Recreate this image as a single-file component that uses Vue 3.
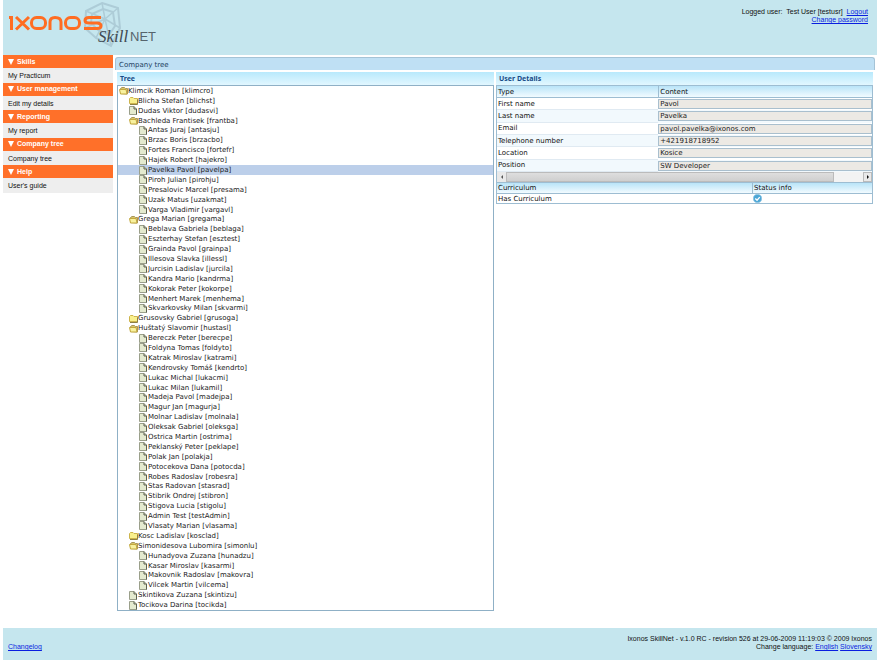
<script setup>
import { ref } from 'vue'

const menu = [
  { title: 'Skills', link: 'My Practicum' },
  { title: 'User management', link: 'Edit my details' },
  { title: 'Reporting', link: 'My report' },
  { title: 'Company tree', link: 'Company tree' },
  { title: 'Help', link: "User's guide" },
]

const source = `open 0 Klimcik Roman [klimcro]
folder 1 Blicha Stefan [blichst]
file 1 Dudas Viktor [dudasvi]
open 1 Bachleda Frantisek [frantba]
file 2 Antas Juraj [antasju]
file 2 Brzac Boris [brzacbo]
file 2 Fortes Francisco [fortefr]
file 2 Hajek Robert [hajekro]
file 2 Pavelka Pavol [pavelpa]
file 2 Piroh Julian [pirohju]
file 2 Presalovic Marcel [presama]
file 2 Uzak Matus [uzakmat]
file 2 Varga Vladimir [vargavl]
open 1 Grega Marian [gregama]
file 2 Beblava Gabriela [beblaga]
file 2 Eszterhay Stefan [esztest]
file 2 Grainda Pavol [grainpa]
file 2 Illesova Slavka [illessl]
file 2 Jurcisin Ladislav [jurcila]
file 2 Kandra Mario [kandrma]
file 2 Kokorak Peter [kokorpe]
file 2 Menhert Marek [menhema]
file 2 Skvarkovsky Milan [skvarmi]
folder 1 Grusovsky Gabriel [grusoga]
open 1 Huštatý Slavomir [hustasl]
file 2 Bereczk Peter [berecpe]
file 2 Foldyna Tomas [foldyto]
file 2 Katrak Miroslav [katrami]
file 2 Kendrovsky Tomáš [kendrto]
file 2 Lukac Michal [lukacmi]
file 2 Lukac Milan [lukamil]
file 2 Madeja Pavol [madejpa]
file 2 Magur Jan [magurja]
file 2 Molnar Ladislav [molnala]
file 2 Oleksak Gabriel [oleksga]
file 2 Ostrica Martin [ostrima]
file 2 Peklanský Peter [peklape]
file 2 Polak Jan [polakja]
file 2 Potocekova Dana [potocda]
file 2 Robes Radoslav [robesra]
file 2 Stas Radovan [stasrad]
file 2 Stibrik Ondrej [stibron]
file 2 Stigova Lucia [stigolu]
file 2 Admin Test [testAdmin]
file 2 Vlasaty Marian [vlasama]
folder 1 Kosc Ladislav [kosclad]
open 1 Simonidesova Lubomira [simonlu]
file 2 Hunadyova Zuzana [hunadzu]
file 2 Kasar Miroslav [kasarmi]
file 2 Makovnik Radoslav [makovra]
file 2 Vilcek Martin [vilcema]
file 1 Skintikova Zuzana [skintizu]
file 1 Tocikova Darina [tocikda]`

const nodes = source.split('\n').map((line) => {
  const [, icon, level, name] = line.match(/^(\w+) (\d) (.*)$/)
  return { icon, level, name }
})
const selected = ref('Pavelka Pavol [pavelpa]')

const details = [
  ['first', 'First name', 'Pavol'],
  ['last', 'Last name', 'Pavelka'],
  ['email', 'Email', 'pavol.pavelka@ixonos.com'],
  ['phone', 'Telephone number', '+421918718952'],
  ['location', 'Location', 'Kosice'],
  ['position', 'Position', 'SW Developer'],
]
</script>

<template>
  <div class="page">
    <header class="top">
      <svg class="logo" viewBox="0 0 165 55" role="img" aria-label="Ixonos SkillNET">
        <g fill="none" stroke="#adccd7">
          <path d="M102 3 L118 8 L120 28 L111 46 L96 38 L85 28 L86 11 Z" stroke-width="2" />
          <path d="M103 9 L113 12 L115 26 L109 35 L98 30 L91 23 L92 14 Z" stroke-width="2" />
          <path d="M105 19 L102 3 M105 19 L118 8 M105 19 L120 28 M105 19 L111 46 M105 19 L96 38 M105 19 L85 28 M105 19 L86 11" stroke-width="1.500" />
        </g>
        <g fill="none" stroke="#ff6d22" stroke-width="3">
          <path d="M9 17.500 H11.500 V30" />
          <path d="M16 17 L29 29.500 M29 17 L16 29.500" />
          <rect x="31.500" y="17.500" width="14" height="11" rx="5" />
          <path d="M50 30 V22 Q50 17.500 55 17.500 Q61 17.500 61 22 V30" />
          <rect x="65.500" y="17.500" width="14" height="11" rx="5" />
          <path d="M101 17.500 H89 Q85 17.500 85 20.500 Q85 23 89 23 H97 Q101 23 101 26 Q101 28.500 97 28.500 H84" />
        </g>
        <text class="script" x="98" y="42">Skill</text>
        <text class="net" x="130" y="41">NET</text>
      </svg>
      <div class="account">
        <div>Logged user:&nbsp; Test User [testusr]&nbsp; <a href="#logout">Logout</a></div>
        <div><a href="#password">Change password</a></div>
      </div>
    </header>

    <div class="middle">
      <nav class="menu">
        <section v-for="group in menu" :key="group.title">
          <h2>
            <svg viewBox="0 0 6 6" aria-hidden="true"><path d="M0 0 H6 L3 6 Z" fill="#fff" /></svg>
            {{ group.title }}
          </h2>
          <a :href="'#' + group.title">{{ group.link }}</a>
        </section>
      </nav>

      <main class="content">
        <h1>Company tree</h1>
        <div class="panels">
          <section class="panel">
            <h3>Tree</h3>
            <div class="tree" role="tree">
              <button
                v-for="node in nodes"
                :key="node.name"
                type="button"
                role="treeitem"
                :class="['node', 'level-' + node.level, { selected: node.name === selected }]"
                @click="selected = node.name"
              >
                <svg v-if="node.icon === 'file'" class="icon" viewBox="0 0 9 9" aria-hidden="true">
                  <path d="M.5 .5 H5 L7.500 3 V8.500 H.5 Z" fill="#e4eacf" stroke="#9a9f8a" />
                  <path d="M5 .5 V3 H7.500 V8.500" fill="none" stroke="#5b5f4e" />
                </svg>
                <svg v-else-if="node.icon === 'folder'" class="icon" viewBox="0 0 9 9" aria-hidden="true">
                  <path d="M.5 7.500 V2.500 L1.500 1.500 H4 L5 2.500 H8.500 V7.500 Z" fill="#f9f08c" stroke="#cdb44c" />
                  <path d="M1 8.500 H8.500 V3.500" fill="none" stroke="#8d8045" />
                </svg>
                <svg v-else class="icon" viewBox="0 0 9 9" aria-hidden="true">
                  <path d="M1.500 7.500 V2.500 L3 1.500 H5.500 L6.500 2.500 H8.500 V8 Z" fill="#d9c66a" stroke="#a8965a" />
                  <path d="M.5 3.500 H7 L8 8 H1.500 Z" fill="#f8f19e" stroke="#c3a83e" />
                </svg>
                <span>{{ node.name }}</span>
              </button>
            </div>
          </section>

          <section class="panel">
            <h3>User Details</h3>
            <table class="details">
              <thead>
                <tr><th>Type</th><th>Content</th></tr>
              </thead>
              <tbody>
                <tr v-for="[id, label, value] in details" :key="id">
                  <td><label :for="id">{{ label }}</label></td>
                  <td class="value"><input :id="id" type="text" readonly :value="value" /></td>
                </tr>
              </tbody>
            </table>
            <div class="scrollbar">
              <button type="button" aria-label="Scroll left">
                <svg viewBox="0 0 4 6"><path d="M3 1 V5 L1 3 Z" fill="#555" /></svg>
              </button>
              <div class="track"><div class="thumb"></div></div>
              <button type="button" class="right" aria-label="Scroll right">
                <svg viewBox="0 0 4 6"><path d="M1 1 V5 L3 3 Z" fill="#111" /></svg>
              </button>
            </div>
            <table class="curriculum">
              <thead>
                <tr><th>Curriculum</th><th>Status info</th></tr>
              </thead>
              <tbody>
                <tr>
                  <td>Has Curriculum</td>
                  <td>
                    <svg class="check" viewBox="0 0 10 10" role="img" aria-label="Yes">
                      <circle cx="5" cy="5" r="4.500" fill="#4aa6d6" stroke="#8cc4e2" />
                      <path d="M2.500 5 L4.500 7 L7.500 3.500" fill="none" stroke="#fff" stroke-width="1.500" />
                    </svg>
                  </td>
                </tr>
              </tbody>
            </table>
          </section>
        </div>
      </main>
    </div>

    <footer class="bottom">
      <a href="#changelog">Changelog</a>
      <div class="about">
        <div>Ixonos SkillNet - v.1.0 RC - revision 526 at 29-06-2009 11:19:03 © 2009 Ixonos</div>
        <div>Change language: <a href="#en">English</a> <a href="#sk">Slovensky</a></div>
      </div>
    </footer>
  </div>
</template>

<style>
body {
  margin: 0;
  background: #fff;
}
</style>

<style scoped>
* {
  box-sizing: border-box;
}
.page {
  display: flex;
  flex-direction: column;
  min-height: 100vh;
  padding: 0 3px;
  font: 7px/8px "Liberation Sans", sans-serif;
  color: #111;
}
.top {
  display: flex;
  justify-content: space-between;
  height: 55px;
  background: #c5e6ee;
}
.logo {
  width: 165px;
  height: 55px;
  margin-left: -3px;
}
.script {
  font: italic 17px "Liberation Serif", serif;
  fill: #3f4a52;
}
.net {
  font: 13px "Liberation Sans", sans-serif;
  fill: #56646c;
}
.account {
  padding: 8px 9px 0 0;
  text-align: right;
}
.account a,
.bottom a {
  color: #0a1ee0;
}
.middle {
  flex: 1;
  display: flex;
  gap: 2px;
}
.menu {
  flex: 0 0 110px;
  align-self: flex-start;
  display: grid;
  grid-auto-rows: 1fr;
  min-height: 138px;
}
.menu section {
  display: flex;
  flex-direction: column;
}
.menu h2 {
  display: flex;
  align-items: center;
  gap: 3px;
  height: 13px;
  margin: 0;
  padding-left: 5px;
  font-size: 7px;
  color: #fff;
  background: #ff7029;
}
.menu h2 svg {
  width: 6px;
  height: 6px;
}
.menu a {
  flex: 1;
  padding: 4px 5px 0;
  color: #111;
  text-decoration: none;
  background: #eee;
}
.content {
  flex: 1;
  display: flex;
  flex-direction: column;
  padding: 2px 2px 17px 0;
  font-family: "DejaVu Sans", sans-serif;
}
h1 {
  height: 13px;
  margin: 0;
  padding: 3px;
  font-size: 7px;
  line-height: 8px;
  font-weight: 400;
  color: #23405f;
  background: #bfe0f4;
  border: 1px solid #a5c3d6;
  border-bottom: 0;
  border-radius: 3px 3px 0 0;
}
.panels {
  flex: 1;
  display: grid;
  grid-template-columns: 1fr 1fr;
  gap: 2px;
  padding: 2px 2px 0;
}
.panel {
  display: flex;
  flex-direction: column;
}
h3 {
  height: 13px;
  margin: 0;
  padding: 3px;
  font: bold 7px/8px "Noto Sans", sans-serif;
  color: #174a86;
  background: linear-gradient(#b8e9fc, #e2f7ff);
}
.tree {
  flex: 1;
  display: grid;
  grid-auto-rows: minmax(9px, 1fr);
  border: 1px solid #8fb0c6;
}
.node {
  display: flex;
  align-items: center;
  min-height: 0;
  padding: 0 0 0 1px;
  border: 0;
  background: none;
  font: inherit;
  line-height: 8px;
  color: #222;
  text-align: left;
}
.level-1 {
  padding-left: 11px;
}
.level-2 {
  padding-left: 21px;
}
.selected {
  background: #bccfea;
}
.icon {
  width: 9px;
  height: 9px;
}
table {
  width: 100%;
  table-layout: fixed;
  border-collapse: separate;
  border-spacing: 0;
  border: 1px solid #9dbdd2;
}
th,
td {
  height: 12px;
  padding: 0 1px;
  font-weight: 400;
  text-align: left;
  vertical-align: middle;
}
th {
  background: linear-gradient(#b9e4f8, #f2fbff);
  border-bottom: 1px solid #9dbdd2;
}
th + th {
  border-left: 1px solid #9dbdd2;
}
.details {
  height: 87px;
  border-bottom: 0;
}
.details th:first-child {
  width: 43%;
}
.details td {
  border-bottom: 1px solid #e0eaf2;
}
.details tr:nth-child(even) td {
  background: #f2f9fd;
}
.details .value {
  padding: 0;
  border-bottom: 0;
}
input {
  display: block;
  width: 100%;
  height: 10px;
  padding: 0 1px;
  border: 1px solid #a9bfce;
  background: #ece9e4;
  font: inherit;
  color: #222;
}
.scrollbar {
  display: flex;
  height: 10px;
  border: 1px solid #9dbdd2;
  border-width: 0 1px;
  background: #dcdcdc;
}
.scrollbar button {
  width: 9px;
  padding: 0;
  border: 0;
  background: #e9e9e9;
  line-height: 0;
}
.scrollbar .right {
  border: 1px solid #bbb;
}
.scrollbar svg {
  width: 4px;
  height: 6px;
}
.track {
  flex: 1;
  background: #f3f3f3;
}
.thumb {
  width: 92%;
  height: 10px;
  background: linear-gradient(#dedede, #cfcfcf);
  border: 1px solid #bbb;
}
.curriculum th {
  height: 11px;
}
.curriculum td {
  height: 9px;
}
.curriculum th:first-child {
  width: 68%;
}
.check {
  display: block;
  width: 9px;
  height: 9px;
}
.bottom {
  display: flex;
  justify-content: space-between;
  align-items: flex-end;
  height: 32px;
  padding: 0 5px 9px;
  background: #c5e6ee;
}
.about {
  text-align: right;
}
</style>
